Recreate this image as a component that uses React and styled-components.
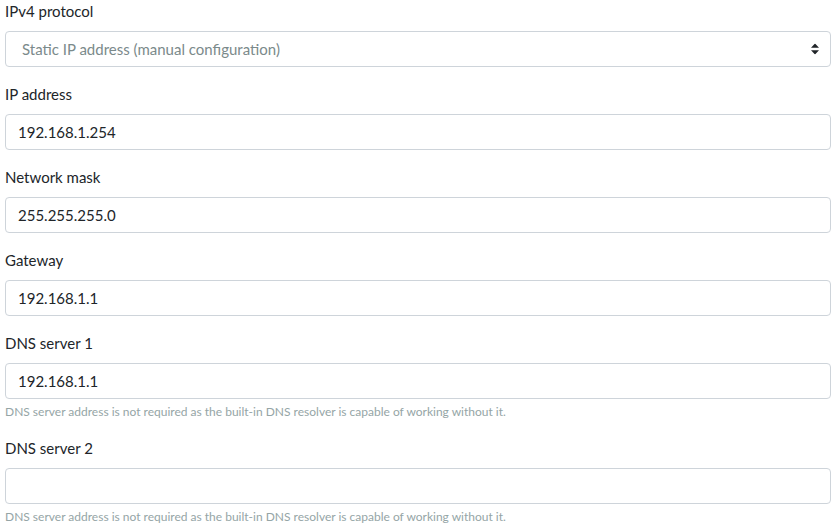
import styled, { createGlobalStyle } from "styled-components";

const GlobalStyle = createGlobalStyle`
  html, body {
    margin: 0;
    padding: 0;
    background: #ffffff;
  }
  body {
    font-family: Lato, "Open Sans", sans-serif;
    color: #212529;
  }
  * {
    box-sizing: border-box;
  }
`;

const Form = styled.form`
  padding: 0 5px;
`;

const Group = styled.div`
  margin-bottom: 16px;
`;

const Label = styled.label`
  display: block;
  font-size: 15px;
  line-height: 22.5px;
  margin-bottom: 8.5px;
  color: #212529;
`;

const Input = styled.input`
  display: block;
  width: 100%;
  height: 36px;
  padding: 0 12px;
  font-family: Lato, "Open Sans", sans-serif;
  font-size: 15px;
  color: #212529;
  background: #fff;
  border: 1px solid #ced4da;
  border-radius: 4px;
  outline: none;
`;

const SelectWrap = styled.div`
  position: relative;
`;

const Select = styled.select`
  display: block;
  width: 100%;
  height: 36px;
  padding: 0 32px 0 16px;
  font-family: Lato, "Open Sans", sans-serif;
  font-size: 15px;
  color: #7b8a8b;
  background: #fff;
  border: 1px solid #ced4da;
  border-radius: 4px;
  appearance: none;
  outline: none;
`;

const Caret = styled.svg`
  position: absolute;
  right: 12px;
  top: 50%;
  transform: translateY(-50%);
  pointer-events: none;
`;

const Help = styled.small`
  display: block;
  margin-top: 4px;
  font-size: 12px;
  line-height: 18px;
  color: #95a5a6;
`;

const helpText =
  "DNS server address is not required as the built-in DNS resolver is capable of working without it.";

const fields = [
  { label: "IP address", value: "192.168.1.254" },
  { label: "Network mask", value: "255.255.255.0" },
  { label: "Gateway", value: "192.168.1.1" },
  { label: "DNS server 1", value: "192.168.1.1", help: helpText },
  { label: "DNS server 2", value: "", help: helpText },
];

export default function App() {
  return (
    <>
      <GlobalStyle />
      <Form>
        <Group>
          <Label>IPv4 protocol</Label>
          <SelectWrap>
            <Select defaultValue="static">
              <option value="dhcp">Automatic (DHCP)</option>
              <option value="static">Static IP address (manual configuration)</option>
            </Select>
            <Caret width="8" height="11" viewBox="0 0 8 11">
              <path d="M4 0 L8 4.3 L0 4.3 Z M4 11 L8 6.7 L0 6.7 Z" fill="#212529" />
            </Caret>
          </SelectWrap>
        </Group>
        {fields.map((f) => (
          <Group key={f.label}>
            <Label>{f.label}</Label>
            <Input defaultValue={f.value} />
            {f.help && <Help>{f.help}</Help>}
          </Group>
        ))}
      </Form>
    </>
  );
}
